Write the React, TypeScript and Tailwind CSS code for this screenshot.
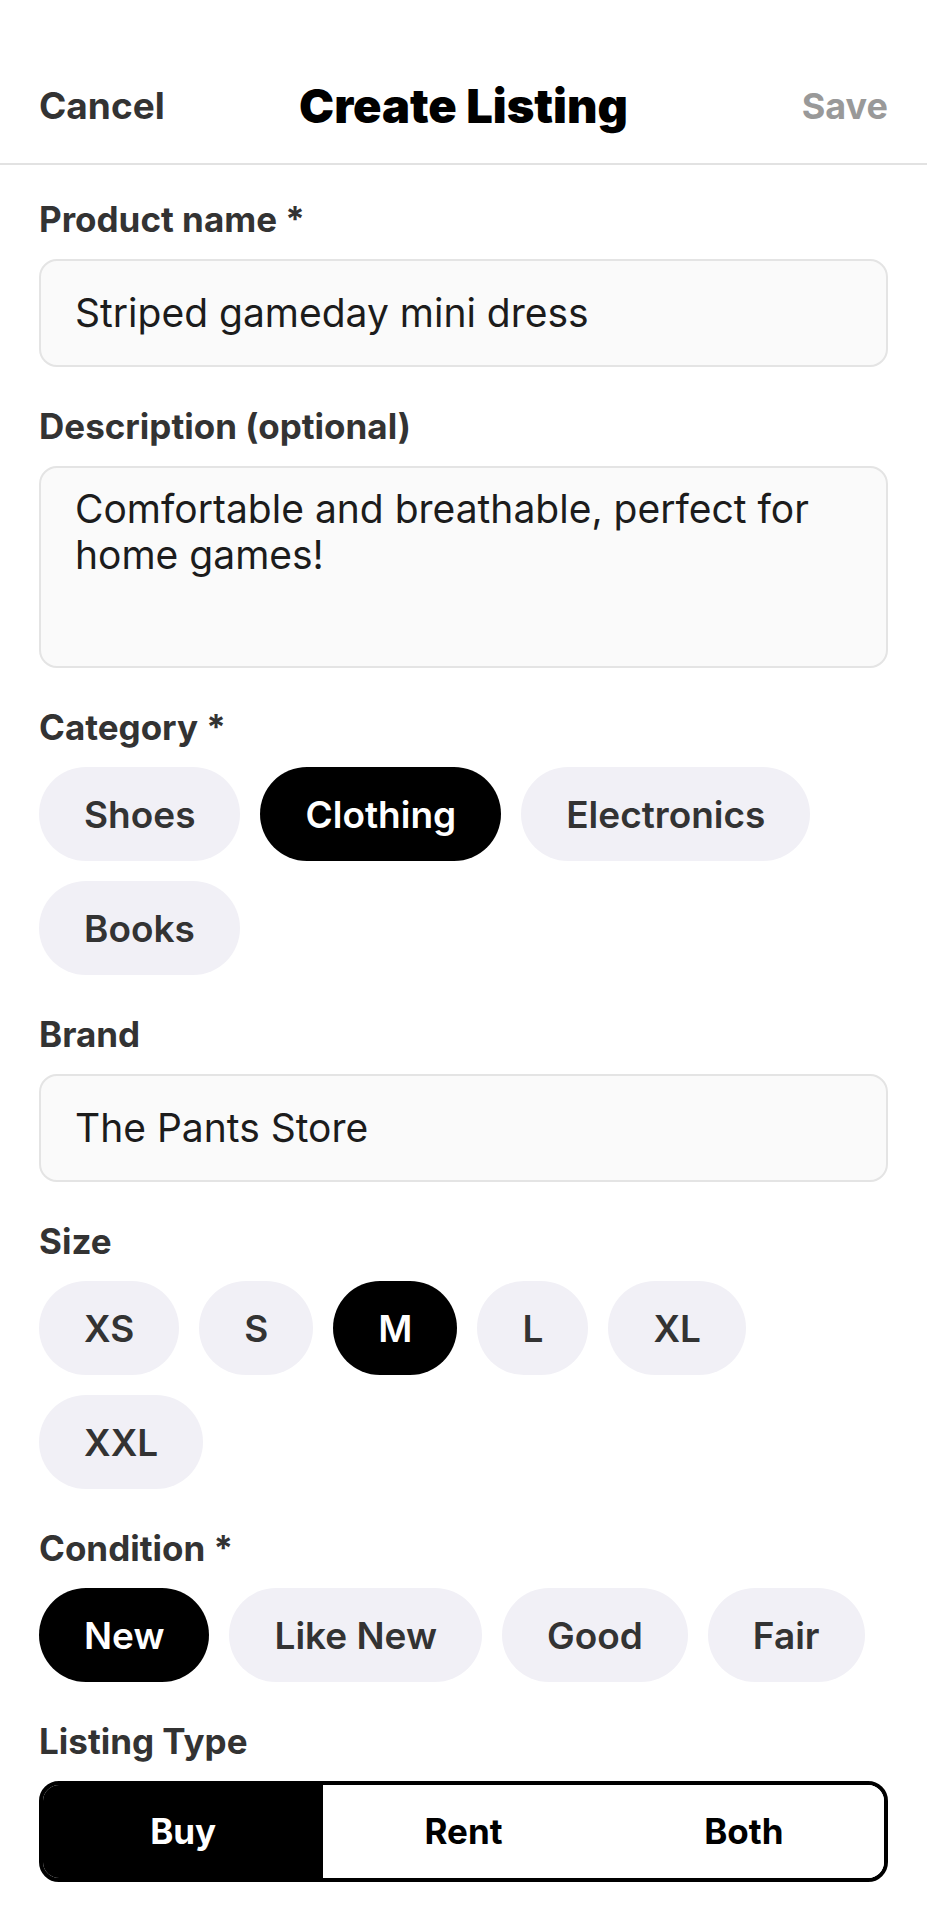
import React from "react";

const font = { fontFamily: "Inter, 'Noto Sans', sans-serif" };

function Label({ children }: { children: React.ReactNode }) {
  return (
    <div className="h-[40px] flex items-center text-[35px] font-bold text-[#333333] leading-none">
      {children}
    </div>
  );
}

function Chip({ label, active }: { label: string; active?: boolean }) {
  return (
    <div
      className={
        "h-[94px] px-[45px] rounded-full flex items-center justify-center text-[37px] font-semibold leading-none " +
        (active ? "bg-black text-white" : "bg-[#f1f0f6] text-[#333333]")
      }
    >
      {label}
    </div>
  );
}

function Section({ label, children }: { label: React.ReactNode; children: React.ReactNode }) {
  return (
    <div className="flex flex-col gap-[20px]">
      <Label>{label}</Label>
      {children}
    </div>
  );
}

export default function App() {
  return (
    <div className="w-[927px] min-h-[1920px] bg-white" style={font}>
      <div className="pt-[66px] pb-[17px] px-[39px] border-b-2 border-[#e2e2e2]">
        <div className="h-[80px] flex items-center justify-between relative">
          <span className="text-[37px] font-bold text-[#333333]">Cancel</span>
          <span className="absolute left-1/2 -translate-x-1/2 text-[47px] font-black text-black whitespace-nowrap">
            Create Listing
          </span>
          <span className="text-[36px] font-bold text-[#999999]">Save</span>
        </div>
      </div>

      <div className="px-[39px] pt-[34px] flex flex-col gap-[39px]">
        <Section label="Product name *">
          <div className="h-[108px] rounded-[18px] border-2 border-[#e4e4e4] bg-[#fafafa] px-[34px] flex items-center text-[39px] text-[#1c1c1c]">
            Striped gameday mini dress
          </div>
        </Section>

        <Section label="Description (optional)">
          <div className="h-[202px] rounded-[18px] border-2 border-[#e4e4e4] bg-[#fafafa] px-[34px] pt-[18px] text-[39px] leading-[46px] text-[#1c1c1c]">
            Comfortable and breathable, perfect for home games!
          </div>
        </Section>

        <Section label="Category *">
          <div className="flex flex-wrap gap-[20px]">
            <Chip label="Shoes" />
            <Chip label="Clothing" active />
            <Chip label="Electronics" />
            <Chip label="Books" />
          </div>
        </Section>

        <Section label="Brand">
          <div className="h-[108px] rounded-[18px] border-2 border-[#e4e4e4] bg-[#fafafa] px-[34px] flex items-center text-[39px] text-[#1c1c1c]">
            The Pants Store
          </div>
        </Section>

        <Section label="Size">
          <div className="flex flex-wrap gap-[20px]">
            <Chip label="XS" />
            <Chip label="S" />
            <Chip label="M" active />
            <Chip label="L" />
            <Chip label="XL" />
            <Chip label="XXL" />
          </div>
        </Section>

        <Section label="Condition *">
          <div className="flex flex-wrap gap-[20px]">
            <Chip label="New" active />
            <Chip label="Like New" />
            <Chip label="Good" />
            <Chip label="Fair" />
          </div>
        </Section>

        <Section label="Listing Type">
          <div className="h-[101px] rounded-[20px] border-[4px] border-black overflow-hidden grid grid-cols-3 text-[35px] font-bold">
            <div className="bg-black text-white flex items-center justify-center">Buy</div>
            <div className="bg-white text-black flex items-center justify-center">Rent</div>
            <div className="bg-white text-black flex items-center justify-center">Both</div>
          </div>
        </Section>
      </div>
    </div>
  );
}
